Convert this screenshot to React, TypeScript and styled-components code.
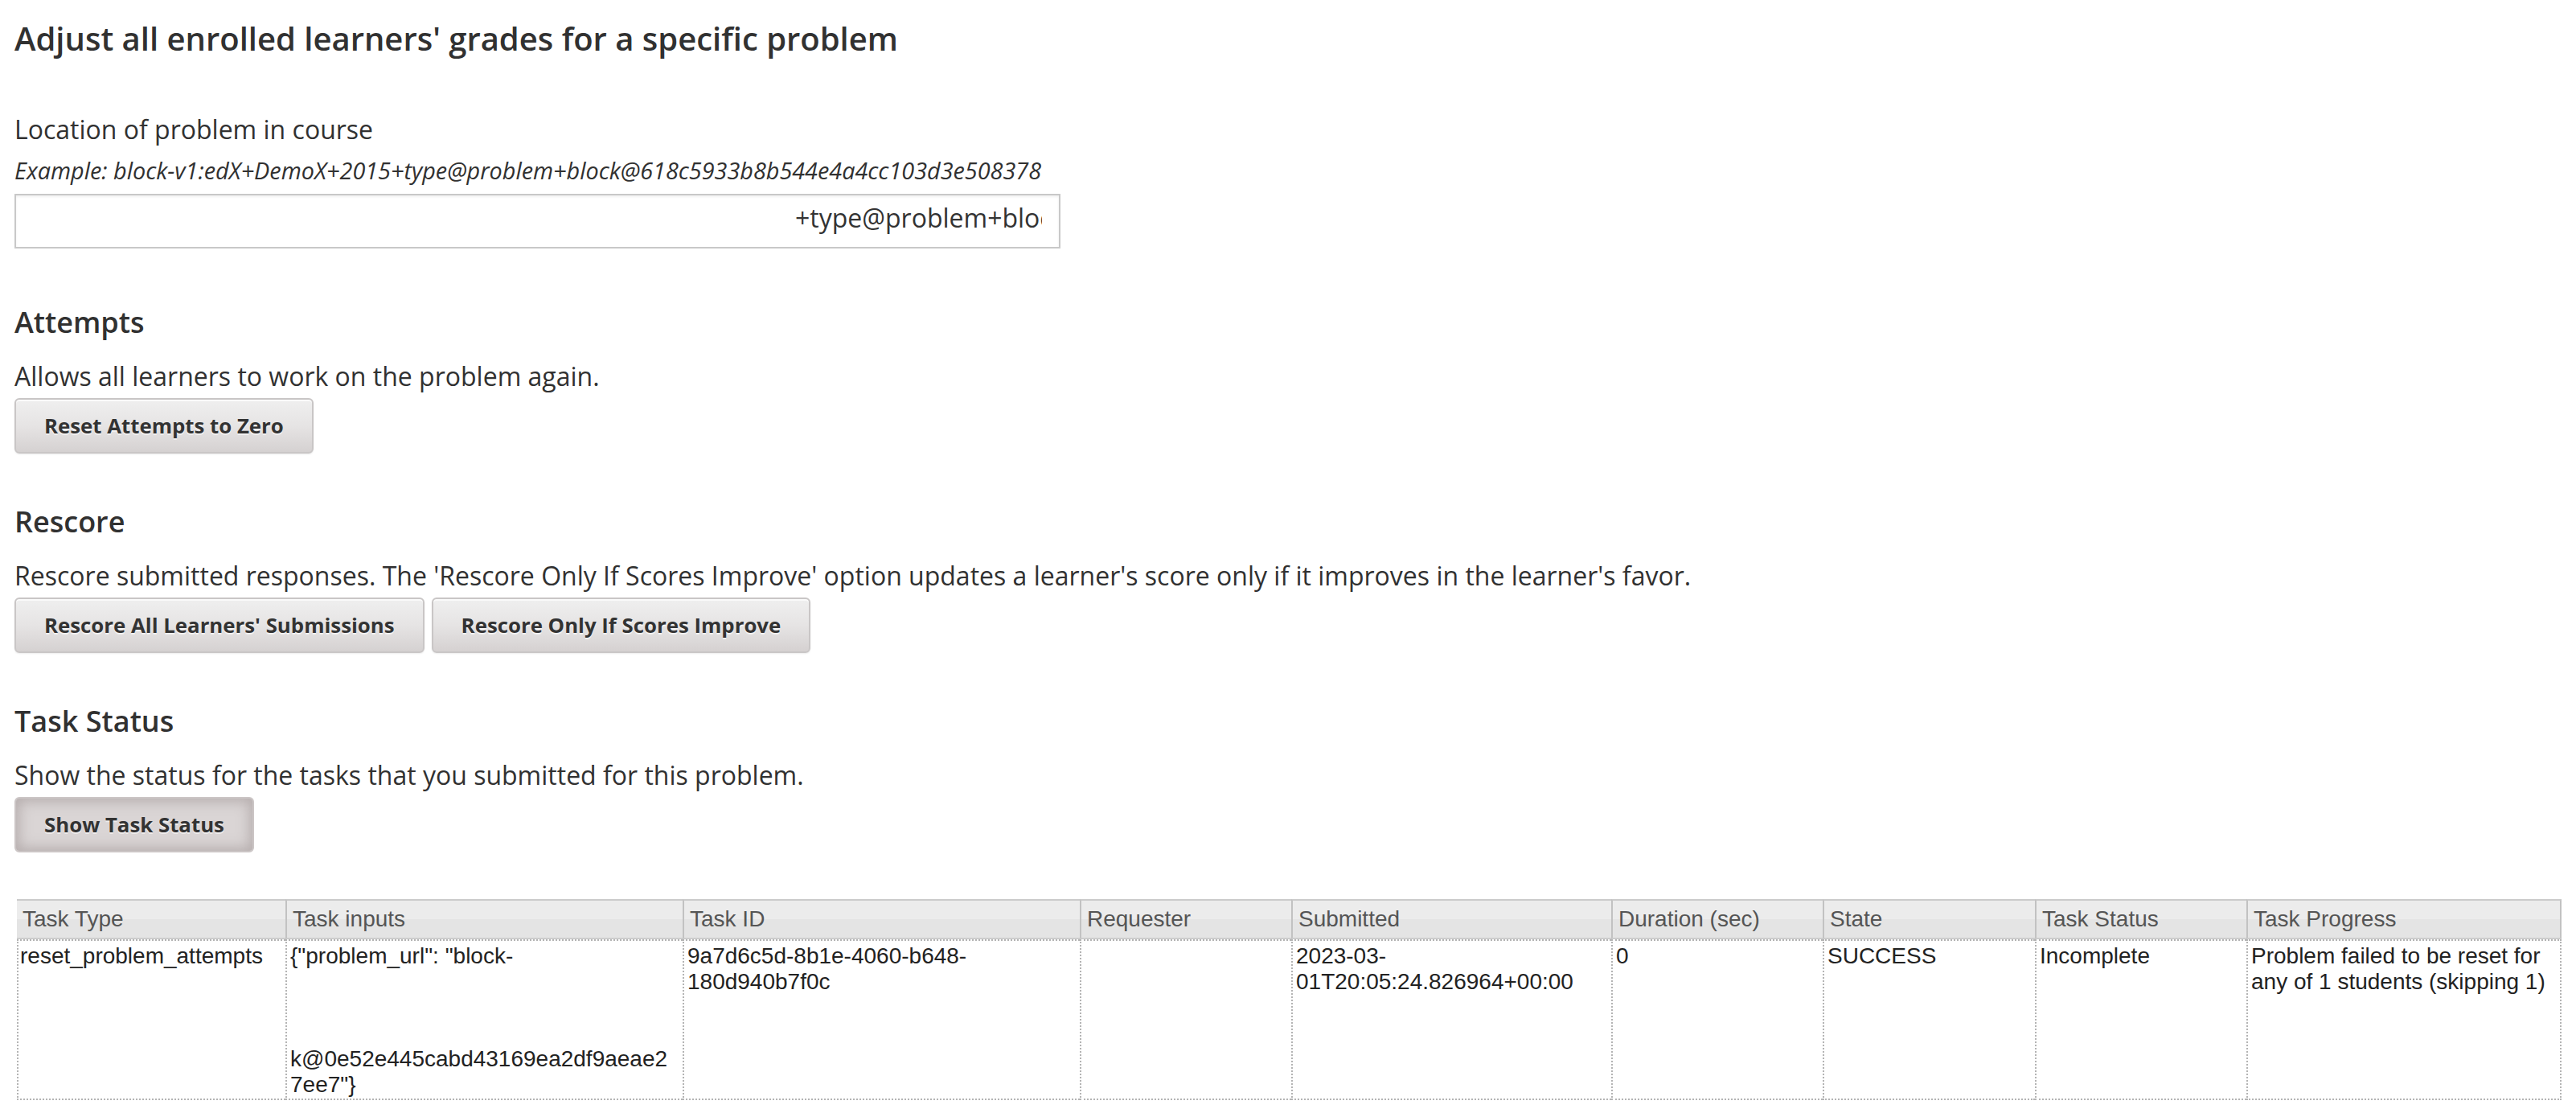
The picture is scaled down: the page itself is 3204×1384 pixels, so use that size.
import React from "react";
import styled, {createGlobalStyle} from "styled-components";

const GlobalStyle = createGlobalStyle`
    html, body {
        margin: 0;
        padding: 0;
        background: #fff;
    }

    body {
        font-family: "Open Sans", "Liberation Sans", sans-serif;
        color: #313131;
    }
`;

const Page = styled.main`
    padding: 21px 18px 40px;
`;

const Title = styled.h2`
    margin: 0;
    font-size: 40px;
    line-height: 54px;
    font-weight: 600;
    color: #313131;
`;

const FieldLabel = styled.label`
    display: block;
    margin-top: 64px;
    font-size: 32px;
    line-height: 44px;
`;

const Hint = styled.p`
    margin: 10px 0 0;
    font-size: 28.8px;
    line-height: 38px;
    font-style: italic;
`;

// margin-bottom collapses with the next section's margin-top
const Field = styled.div`
    box-sizing: border-box;
    width: 1301px;
    height: 68px;
    margin: 10px 0 65px;
    padding: 0 21px 8px 0;
    border: 2px solid #c8c8c8;
    box-shadow: inset 0 2px 3px rgba(0, 0, 0, 0.06);
    font-size: 32px;
    line-height: 56px;
    color: #333;
`;

const FieldValue = styled.span`
    display: block;
    overflow: hidden;
    white-space: nowrap;
    text-indent: 969px;
`;

const Section = styled.section`
    margin-top: 58px;
`;

const SectionTitle = styled.h3`
    margin: 0;
    padding-top: 3px;
    font-size: 36px;
    line-height: 48px;
    font-weight: 600;
`;

const SectionText = styled.p`
    margin: 21px 0 5px;
    font-size: 32px;
    line-height: 44px;
`;

const ButtonRow = styled.div`
    display: flex;
    gap: 9px;
`;

const ActionButton = styled.button<{ $pressed?: boolean }>`
    box-sizing: border-box;
    height: 69px;
    padding: 0 35px;
    border: 2px solid ${({$pressed}) => $pressed ? "#cbc5c5" : "#c9c6c6"};
    border-radius: 6px;
    font-family: "Open Sans", "Liberation Sans", sans-serif;
    font-size: 25.8px;
    line-height: 35px;
    font-weight: 700;
    color: #333;
    text-shadow: 0 2px 0 rgba(255, 255, 255, 0.6);
    background: ${({$pressed}) => $pressed
            ? "#dad5d5"
            : "linear-gradient(180deg, #efefef 0%, #e6e4e4 50%, #d5d1d1 100%)"};
    box-shadow: ${({$pressed}) => $pressed
            ? "inset 0 0 16px 4px rgba(125, 112, 112, 0.38)"
            : "inset 0 2px 0 rgba(255, 255, 255, 0.7), 0 1px 2px rgba(0, 0, 0, 0.08)"};
    cursor: pointer;
`;

const TaskGrid = styled.div`
    margin: 58px 0 0 3px;
    display: grid;
    grid-template-columns: 334px 494px 494px 263px 398px 263px 264px 263px 392px;
    font-family: "Liberation Sans", Arial, sans-serif;
    font-size: 28px;
`;

const HeadCell = styled.div<{ $first?: boolean; $last?: boolean }>`
    box-sizing: border-box;
    height: 50px;
    padding-left: 7px;
    border-top: 2px solid #cbcbcb;
    border-bottom: 2px solid #cdcdcd;
    border-left: ${({$first}) => $first ? "none" : "2px solid #c2c2c2"};
    border-right: ${({$last}) => $last ? "2px solid #c2c2c2" : "none"};
    background: linear-gradient(180deg, #ececec 50%, #e4e4e4 50%);
    color: #555;
    line-height: 46px;
    white-space: nowrap;
    overflow: hidden;
`;

const BodyCell = styled.div<{ $first?: boolean; $last?: boolean }>`
    box-sizing: border-box;
    height: 200px;
    padding: 3px 4px 1px ${({$first}) => $first ? 2 : 4}px;
    border-top: 2px dotted #b4b4b4;
    border-bottom: 2px dotted #b4b4b4;
    border-left: 2px dotted #b4b4b4;
    border-right: ${({$last}) => $last ? "2px dotted #b4b4b4" : "none"};
    color: #222;
    line-height: 32px;
    overflow: hidden;
`;

const CellLine = styled.span<{ $hidden?: boolean }>`
    display: block;
    white-space: nowrap;
    visibility: ${({$hidden}) => $hidden ? "hidden" : "visible"};
`;

type Line = { text: string; hidden?: boolean };

const headers = [
    "Task Type",
    "Task inputs",
    "Task ID",
    "Requester",
    "Submitted",
    "Duration (sec)",
    "State",
    "Task Status",
    "Task Progress",
];

const row: Line[][] = [
    [{text: "reset_problem_attempts"}],
    [
        {text: "{\"problem_url\": \"block-"},
        {text: "v1:edX+DemoX+2015+type@", hidden: true},
        {text: "problem+block@", hidden: true},
        {text: "bloc", hidden: true},
        {text: "k@0e52e445cabd43169ea2df9aeae2"},
        {text: "7ee7\"}"},
    ],
    [{text: "9a7d6c5d-8b1e-4060-b648-"}, {text: "180d940b7f0c"}],
    [],
    [{text: "2023-03-"}, {text: "01T20:05:24.826964+00:00"}],
    [{text: "0"}],
    [{text: "SUCCESS"}],
    [{text: "Incomplete"}],
    [{text: "Problem failed to be reset for"}, {text: "any of 1 students (skipping 1)"}],
];

function App() {
    const last = headers.length - 1;

    return (
        <>
            <GlobalStyle/>
            <Page>
                <Title>Adjust all enrolled learners' grades for a specific problem</Title>

                <FieldLabel htmlFor="problem-location">Location of problem in course</FieldLabel>
                <Hint>Example: block-v1:edX+DemoX+2015+type@problem+block@618c5933b8b544e4a4cc103d3e508378</Hint>
                <Field id="problem-location">
                    <FieldValue>+type@problem+block@0e52e445cabd43169ea2df9aeae27ee7</FieldValue>
                </Field>

                <Section>
                    <SectionTitle>Attempts</SectionTitle>
                    <SectionText>Allows all learners to work on the problem again.</SectionText>
                    <ButtonRow>
                        <ActionButton type="button">Reset Attempts to Zero</ActionButton>
                    </ButtonRow>
                </Section>

                <Section>
                    <SectionTitle>Rescore</SectionTitle>
                    <SectionText>
                        Rescore submitted responses. The 'Rescore Only If Scores Improve' option updates a learner's score only if it improves in the learner's favor.
                    </SectionText>
                    <ButtonRow>
                        <ActionButton type="button">Rescore All Learners' Submissions</ActionButton>
                        <ActionButton type="button">Rescore Only If Scores Improve</ActionButton>
                    </ButtonRow>
                </Section>

                <Section>
                    <SectionTitle>Task Status</SectionTitle>
                    <SectionText>Show the status for the tasks that you submitted for this problem.</SectionText>
                    <ButtonRow>
                        <ActionButton type="button" $pressed>Show Task Status</ActionButton>
                    </ButtonRow>
                </Section>

                <TaskGrid role="grid">
                    {headers.map((title, index) => (
                        <HeadCell key={title} $first={index === 0} $last={index === last}>
                            {title}
                        </HeadCell>
                    ))}
                    {row.map((lines, index) => (
                        <BodyCell key={headers[index]} $first={index === 0} $last={index === last}>
                            {lines.map((line, i) => (
                                <CellLine key={i} $hidden={line.hidden}>{line.text}</CellLine>
                            ))}
                        </BodyCell>
                    ))}
                </TaskGrid>
            </Page>
        </>
    );
}

export default App;
